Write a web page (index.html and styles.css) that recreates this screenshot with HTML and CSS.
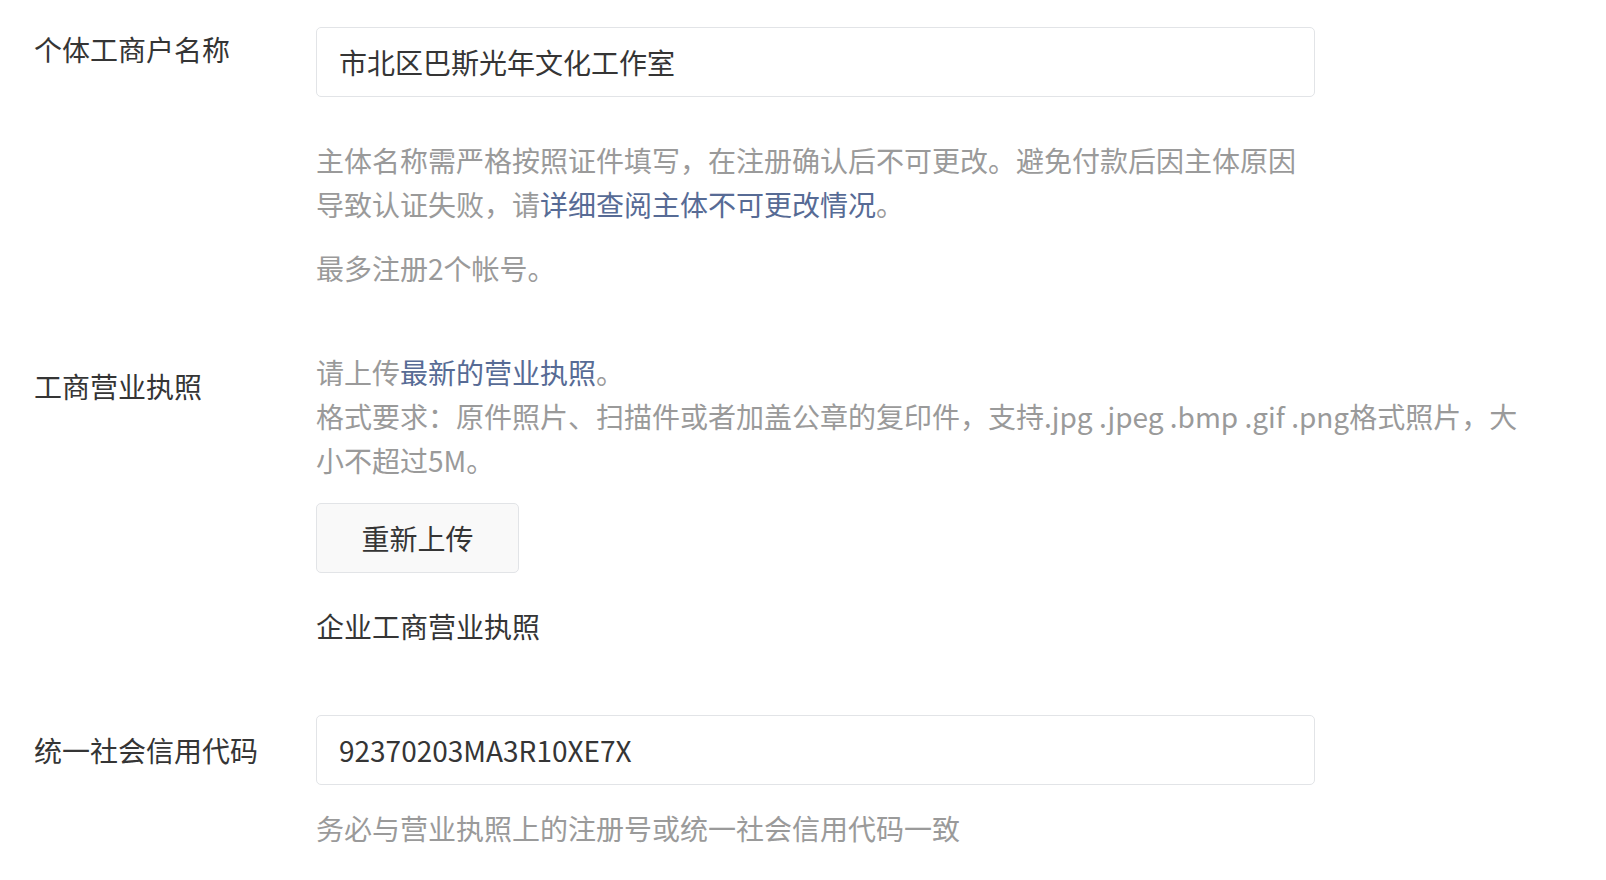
FILE: index.html
```html
<!DOCTYPE html>
<html lang="zh-CN">
<head>
    <meta charset="UTF-8">
    <meta name="viewport" content="width=device-width, initial-scale=1.0">
    <title>主体信息登记</title>
    <link rel="stylesheet" href="styles.css">
</head>
<body>
    <div class="form">
        <div class="form-item item-name">
            <label class="form-label" for="bizName">个体工商户名称</label>
            <div class="form-control">
                <input type="text" id="bizName" class="text-input" value="市北区巴斯光年文化工作室">
                <p class="tips tips-name">主体名称需严格按照证件填写，在注册确认后不可更改。避免付款后因主体原因导致认证失败，请<a href="#" class="link">详细查阅主体不可更改情况</a>。</p>
                <p class="tips tips-limit">最多注册2个帐号。</p>
            </div>
        </div>

        <div class="form-item item-license">
            <div class="form-label">工商营业执照</div>
            <div class="form-control">
                <p class="tips tips-upload">请上传<a href="#" class="link">最新的营业执照</a>。<br>格式要求：原件照片、扫描件或者加盖公章的复印件，支持.jpg .jpeg .bmp .gif .png格式照片，大小不超过5M。</p>
                <button class="btn" type="button">重新上传</button>
                <div class="file-name">企业工商营业执照</div>
            </div>
        </div>

        <div class="form-item item-code">
            <label class="form-label" for="creditCode">统一社会信用代码</label>
            <div class="form-control">
                <input type="text" id="creditCode" class="text-input" value="92370203MA3R10XE7X">
                <p class="tips tips-code">务必与营业执照上的注册号或统一社会信用代码一致</p>
            </div>
        </div>
    </div>
</body>
</html>
```

FILE: styles.css
```css
:root {
    --text-color: #353535;
    --tips-color: #9a9a9a;
    --link-color: #576b95;
    --border-color: #e2e4e7;
    --btn-bg: #f9f9f9;
}

body {
    margin: 0;
    background-color: #ffffff;
    color: var(--text-color);
    font-family: "Noto Sans CJK SC", "Noto Sans", sans-serif;
    font-size: 28px;
    line-height: 44px;
    overflow: hidden;
}

.form {
    padding: 27px 0 0 34px;
}

.form-item {
    display: flex;
    align-items: flex-start;
}

.form-label {
    width: 282px;
    flex-shrink: 0;
}

.form-control {
    flex: 1;
    display: flex;
    flex-direction: column;
    align-items: flex-start;
}

.text-input {
    box-sizing: border-box;
    width: 999px;
    height: 70px;
    padding: 0 22px;
    border: 1px solid var(--border-color);
    border-radius: 5px;
    background-color: #ffffff;
    color: var(--text-color);
    font-family: inherit;
    font-size: 28px;
    outline: none;
}

.tips {
    margin: 0;
    color: var(--tips-color);
}

.link {
    color: var(--link-color);
    text-decoration: none;
}

.tips-name {
    max-width: 1000px;
    margin-top: 41px;
}

.tips-limit {
    margin-top: 20px;
}

/* upload row */
.item-license {
    margin-top: 60px;
}

.item-license .form-label {
    margin-top: 14px;
}

.tips-upload {
    max-width: 1215px;
}

.btn {
    box-sizing: border-box;
    width: 203px;
    height: 70px;
    margin-top: 21px;
    border: 1px solid var(--border-color);
    border-radius: 5px;
    background-color: var(--btn-bg);
    color: var(--text-color);
    font-family: inherit;
    font-size: 28px;
    cursor: pointer;
}

.file-name {
    margin-top: 31px;
}

/* credit code row */
.item-code {
    margin-top: 67px;
}

.item-code .form-label {
    margin-top: 13px;
}

.tips-code {
    margin-top: 21px;
}
```
